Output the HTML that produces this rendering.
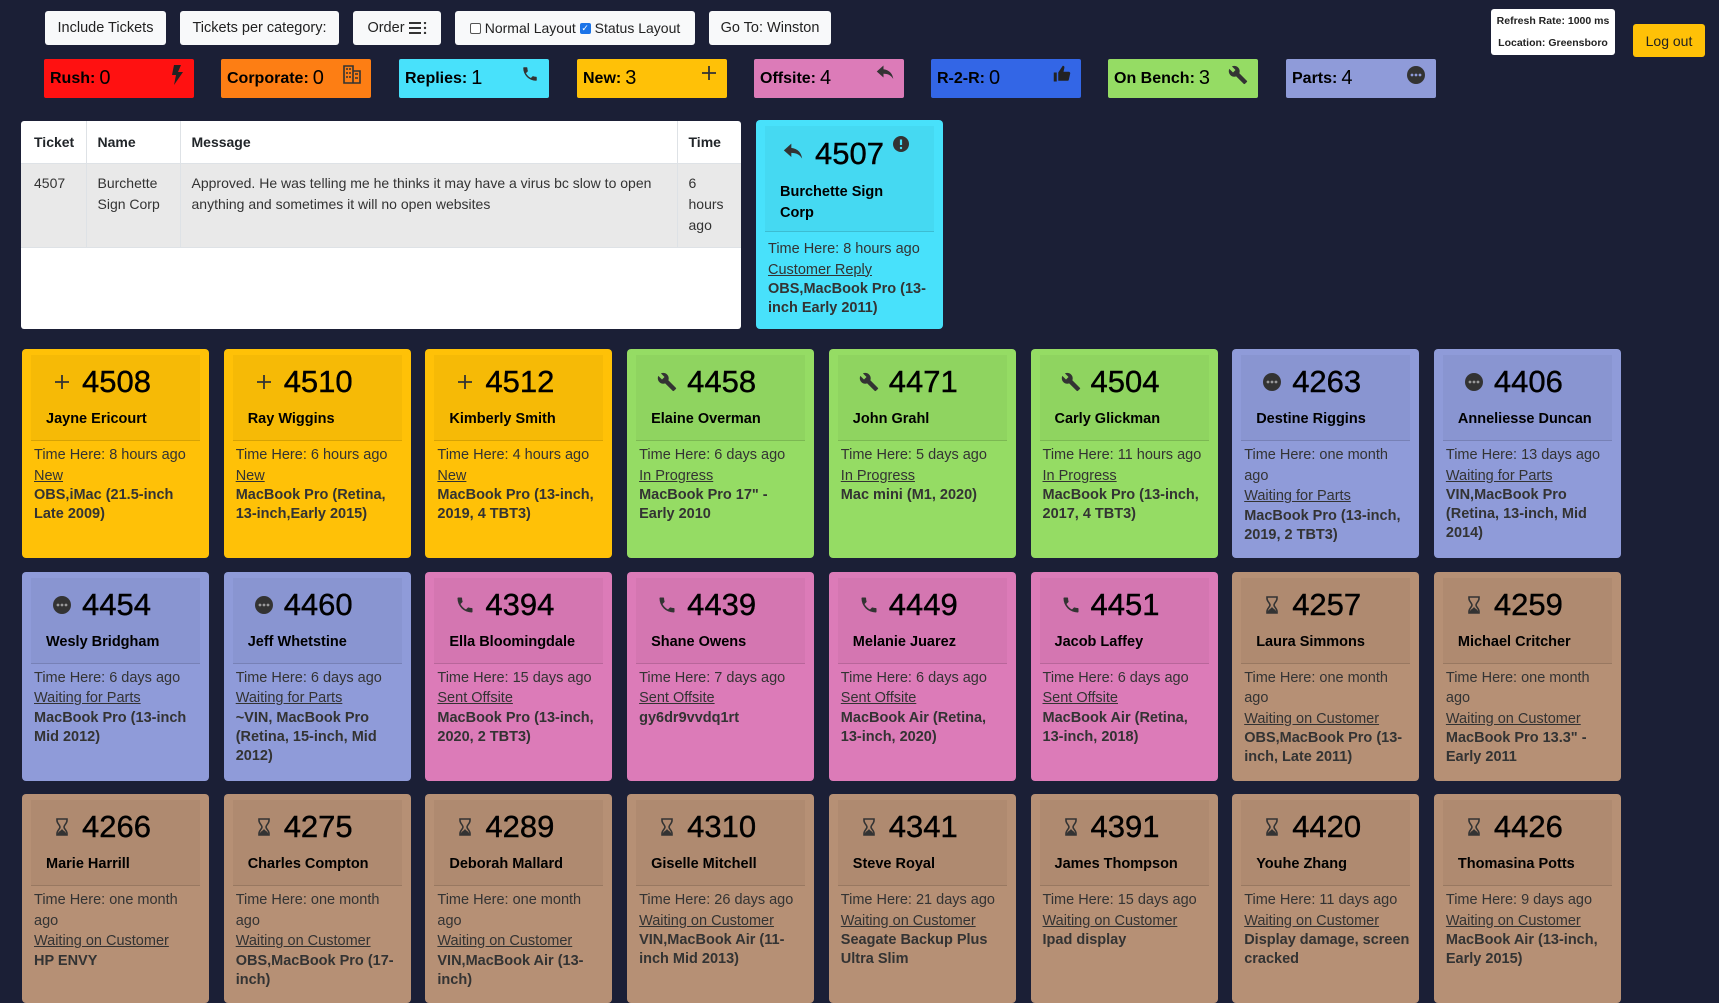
<!DOCTYPE html>
<html><head><meta charset="utf-8">
<style>
*{box-sizing:border-box;margin:0;padding:0}
body{width:1719px;height:966px;overflow:hidden;background:#1b1f36;font-family:"Liberation Sans",Arial,sans-serif;position:relative;color:#212529}
.btn{position:absolute;top:11px;height:34px;background:#f8f9fa;border-radius:3px;font-size:14.5px;color:#222;display:flex;align-items:center;justify-content:center}
.cat{position:absolute;top:59px;height:39px;width:150px;border-radius:2px;padding:0 6px;font-size:16px;font-weight:bold;color:#000;display:flex;align-items:center}
.cat .n{font-weight:normal;font-size:20px;margin-left:4px}
.cat svg{position:absolute;right:10px;top:6px}
.card{position:absolute;width:187px;height:209px;border-radius:4px;padding:6px 9px}
.hd{height:86px;background:rgba(0,0,0,.035);border-bottom:1px solid rgba(0,0,0,.13);position:relative}
.hd .num{position:absolute;left:51px;top:10px;font-size:31px;color:#000;line-height:34px;-webkit-text-stroke:0.4px #000}
.hd .ic{position:absolute;left:21px;top:17px;width:20px;height:20px}
.hd .nm{position:absolute;left:15px;top:55px;font-size:14.5px;font-weight:bold;color:#000;line-height:18px}
.bd{padding:4px 0 0 3px;font-size:14.5px;line-height:20.5px;color:#333}
.bd a{color:#333;text-decoration:underline;display:block}
.bd b{display:block;line-height:19px;color:#333}
table{border-collapse:collapse}
</style></head><body>

<div class="btn" style="left:45px;width:121px">Include Tickets</div>
<div class="btn" style="left:180px;width:159px">Tickets per category:</div>
<div class="btn" style="left:353px;width:88px">Order&nbsp;<svg width="18" height="12" viewBox="0 0 18 12"><path d="M0 1h12M0 6h12M0 11h12" stroke="#333" stroke-width="2"/><circle cx="16" cy="1" r="1.2" fill="#333"/><circle cx="16" cy="6" r="1.2" fill="#333"/><circle cx="16" cy="11" r="1.2" fill="#333"/></svg></div>
<div class="btn" style="left:455px;width:240px;font-size:14px"><span style="display:inline-block;width:11px;height:11px;border:1px solid #555;border-radius:2px;background:#fff;margin-right:4px"></span>Normal Layout&nbsp;<span style="display:inline-block;width:11px;height:11px;border-radius:2px;background:#1a73e8;margin-right:4px;color:#fff;font-size:9px;line-height:11px;text-align:center">✓</span>Status Layout</div>
<div class="btn" style="left:709px;width:122px">Go To: Winston</div>
<div class="btn" style="left:1491px;top:9px;width:124px;height:46px;flex-direction:column;font-size:10.5px;font-weight:bold;gap:10px;background:#fff"><span>Refresh Rate: 1000 ms</span><span>Location: Greensboro</span></div>
<div class="btn" style="left:1633px;top:24px;width:72px;height:33px;background:#ffc107;font-size:14px">Log out</div>

<div class="cat" style="left:44px;background:#ff1111">Rush:<span class="n">0</span><svg width="14" height="20" viewBox="0 0 14 20"><path d="M4 0h7l-3 7h5L4 20l2-10H2z" fill="#222"/></svg></div>
<div class="cat" style="left:221px;background:#fd7e14">Corporate:<span class="n">0</span><svg width="18" height="19" viewBox="0 0 18 19"><path d="M1 1h9v17H1zM10 6h7v12h-7" fill="none" stroke="#333" stroke-width="1.6"/><path d="M3 4h2M6 4h2M3 8h2M6 8h2M3 12h2M6 12h2M12 9h3M12 13h3" stroke="#333" stroke-width="1.6"/></svg></div>
<div class="cat" style="left:399px;background:#48e1fb">Replies:<span class="n">1</span><svg width="18" height="18" viewBox="0 0 24 24"><path d="M6.6 10.8a15 15 0 006.6 6.6l2.2-2.2c.3-.3.7-.4 1-.2 1.1.4 2.3.6 3.6.6.6 0 1 .4 1 1V20c0 .6-.4 1-1 1A17 17 0 013 4c0-.6.4-1 1-1h3.5c.6 0 1 .4 1 1 0 1.3.2 2.5.6 3.6.1.3 0 .7-.2 1z" fill="#333"/></svg></div>
<div class="cat" style="left:577px;background:#ffc107">New:<span class="n">3</span><svg width="16" height="16" viewBox="0 0 16 16"><path d="M8 1v14M1 8h14" stroke="#333" stroke-width="1.8"/></svg></div>
<div class="cat" style="left:754px;background:#dc7bb8">Offsite:<span class="n">4</span><svg width="18" height="16" viewBox="0 0 24 20"><path d="M10 5V0L1 8l9 8v-5c6 0 10 2 13 7-1-7-5-12-13-13z" fill="#333"/></svg></div>
<div class="cat" style="left:931px;background:#3366e6">R-2-R:<span class="n">0</span><svg width="18" height="18" viewBox="0 0 24 24"><path d="M1 10h4v12H1zM7 21V10l6-9c1.5 0 2.5 1 2.2 2.6L14 9h7c1.1 0 2 .9 2 2l-2 9c-.3.7-1 1-1.7 1z" fill="#222"/></svg></div>
<div class="cat" style="left:1108px;background:#95dc64">On Bench:<span class="n">3</span><svg width="20" height="20" viewBox="0 0 24 24"><path d="M22.7 19l-9.1-9.1c.9-2.3.4-5-1.5-6.9-2-2-5-2.4-7.4-1.3L9 6 6 9 1.6 4.7C.4 7.1.9 10.1 2.9 12.1c1.9 1.9 4.6 2.4 6.9 1.5l9.1 9.1c.4.4 1 .4 1.4 0l2.3-2.3c.5-.4.5-1.1.1-1.4z" fill="#333"/></svg></div>
<div class="cat" style="left:1286px;background:#8f9bd9">Parts:<span class="n">4</span><svg width="20" height="20" viewBox="0 0 20 20"><circle cx="10" cy="10" r="9" fill="#333"/><circle cx="6" cy="10" r="1.4" fill="#8f9bd9"/><circle cx="10" cy="10" r="1.4" fill="#8f9bd9"/><circle cx="14" cy="10" r="1.4" fill="#8f9bd9"/></svg></div>

<div style="position:absolute;left:21px;top:121px;width:720px;height:208px;background:#fff;border-radius:3px;overflow:hidden">
<table style="width:100%;font-size:14px;color:#212529;table-layout:fixed">
<tr style="height:42px;font-weight:bold;text-align:left"><td style="width:65px;padding-left:13px;border-right:1px solid #dee2e6">Ticket</td><td style="width:94px;padding-left:11px;border-right:1px solid #dee2e6">Name</td><td style="padding-left:11px;border-right:1px solid #dee2e6">Message</td><td style="width:64px;padding-left:11px">Time</td></tr>
<tr style="height:84px;background:#e9e9e9;vertical-align:top;line-height:21px;color:#333;border-top:1px solid #dee2e6;border-bottom:1px solid #dee2e6"><td style="padding:9px 0 0 13px;border-right:1px solid #dee2e6">4507</td><td style="padding:9px 0 0 11px;border-right:1px solid #dee2e6">Burchette Sign Corp</td><td style="padding:9px 8px 0 11px;border-right:1px solid #dee2e6">Approved. He was telling me he thinks it may have a virus bc slow to open anything and sometimes it will no open websites</td><td style="padding:9px 8px 0 11px">6 hours ago</td></tr>
</table></div>

<div class="card" style="left:756px;top:120px;background:#48e1fb">
<div class="hd" style="height:106px">
<svg class="ic" style="left:18px;top:16px" viewBox="0 0 24 20"><path d="M10 5V0L1 8l9 8v-5c6 0 10 2 13 7-1-7-5-12-13-13z" fill="#333"/></svg>
<div class="num" style="left:50px;top:11px">4507</div>
<svg style="position:absolute;left:128px;top:10px" width="16" height="16" viewBox="0 0 16 16"><circle cx="8" cy="8" r="8" fill="#333"/><path d="M8 3.5v5.5" stroke="#48e1fb" stroke-width="2.2"/><circle cx="8" cy="12" r="1.2" fill="#48e1fb"/></svg>
<div class="nm" style="top:56px;line-height:21px">Burchette Sign<br>Corp</div>
</div>
<div class="bd" style="padding-top:7px"><div>Time Here: 8 hours ago</div><a>Customer Reply</a><b>OBS,MacBook Pro (13-inch Early 2011)</b></div>
</div>

<div id="cards"></div>
<script>
const Y='#ffc107',G='#95dc64',P='#8f9bd9',K='#dc7bb8',B='#b69075';
const ic={
plus:'<svg class="ic" viewBox="0 0 20 20"><path d="M10 3v14M3 10h14" stroke="#333" stroke-width="1.8"/></svg>',
wr:'<svg class="ic" viewBox="0 0 24 24"><path d="M22.7 19l-9.1-9.1c.9-2.3.4-5-1.5-6.9-2-2-5-2.4-7.4-1.3L9 6 6 9 1.6 4.7C.4 7.1.9 10.1 2.9 12.1c1.9 1.9 4.6 2.4 6.9 1.5l9.1 9.1c.4.4 1 .4 1.4 0l2.3-2.3c.5-.4.5-1.1.1-1.4z" fill="#333"/></svg>',
dot:'<svg class="ic" viewBox="0 0 20 20"><circle cx="10" cy="10" r="9" fill="#333"/><circle cx="6" cy="10" r="1.4" fill="#999"/><circle cx="10" cy="10" r="1.4" fill="#999"/><circle cx="14" cy="10" r="1.4" fill="#999"/></svg>',
ph:'<svg class="ic" viewBox="0 0 24 24"><path d="M6.6 10.8a15 15 0 006.6 6.6l2.2-2.2c.3-.3.7-.4 1-.2 1.1.4 2.3.6 3.6.6.6 0 1 .4 1 1V20c0 .6-.4 1-1 1A17 17 0 013 4c0-.6.4-1 1-1h3.5c.6 0 1 .4 1 1 0 1.3.2 2.5.6 3.6.1.3 0 .7-.2 1z" fill="#333"/></svg>',
hg:'<svg class="ic" viewBox="0 0 20 20"><path d="M5 2h10v1.5c0 3-3 4.5-3 6.5s3 3.5 3 6.5V18H5v-1.5c0-3 3-4.5 3-6.5S5 6.5 5 3.5z" fill="none" stroke="#333" stroke-width="1.6"/><path d="M5.5 17.5c0-3 4.5-4 4.5-6 0 2 4.5 3 4.5 6z" fill="#333"/></svg>'};
const d=[
[Y,'plus',4508,'Jayne Ericourt','8 hours ago','New','OBS,iMac (21.5-inch Late 2009)'],
[Y,'plus',4510,'Ray Wiggins','6 hours ago','New','MacBook Pro (Retina, 13-inch,Early 2015)'],
[Y,'plus',4512,'Kimberly Smith','4 hours ago','New','MacBook Pro (13-inch, 2019, 4 TBT3)'],
[G,'wr',4458,'Elaine Overman','6 days ago','In Progress','MacBook Pro 17" - Early 2010'],
[G,'wr',4471,'John Grahl','5 days ago','In Progress','Mac mini (M1, 2020)'],
[G,'wr',4504,'Carly Glickman','11 hours ago','In Progress','MacBook Pro (13-inch, 2017, 4 TBT3)'],
[P,'dot',4263,'Destine Riggins','one month ago','Waiting for Parts','MacBook Pro (13-inch, 2019, 2 TBT3)'],
[P,'dot',4406,'Anneliesse Duncan','13 days ago','Waiting for Parts','VIN,MacBook Pro (Retina, 13-inch, Mid 2014)'],
[P,'dot',4454,'Wesly Bridgham','6 days ago','Waiting for Parts','MacBook Pro (13-inch Mid 2012)'],
[P,'dot',4460,'Jeff Whetstine','6 days ago','Waiting for Parts','~VIN, MacBook Pro (Retina, 15-inch, Mid 2012)'],
[K,'ph',4394,'Ella Bloomingdale','15 days ago','Sent Offsite','MacBook Pro (13-inch, 2020, 2 TBT3)'],
[K,'ph',4439,'Shane Owens','7 days ago','Sent Offsite','gy6dr9vvdq1rt'],
[K,'ph',4449,'Melanie Juarez','6 days ago','Sent Offsite','MacBook Air (Retina, 13-inch, 2020)'],
[K,'ph',4451,'Jacob Laffey','6 days ago','Sent Offsite','MacBook Air (Retina, 13-inch, 2018)'],
[B,'hg',4257,'Laura Simmons','one month ago','Waiting on Customer','OBS,MacBook Pro (13-inch, Late 2011)'],
[B,'hg',4259,'Michael Critcher','one month ago','Waiting on Customer','MacBook Pro 13.3" - Early 2011'],
[B,'hg',4266,'Marie Harrill','one month ago','Waiting on Customer','HP ENVY'],
[B,'hg',4275,'Charles Compton','one month ago','Waiting on Customer','OBS,MacBook Pro (17-inch)'],
[B,'hg',4289,'Deborah Mallard','one month ago','Waiting on Customer','VIN,MacBook Air (13-inch)'],
[B,'hg',4310,'Giselle Mitchell','26 days ago','Waiting on Customer','VIN,MacBook Air (11-inch Mid 2013)'],
[B,'hg',4341,'Steve Royal','21 days ago','Waiting on Customer','Seagate Backup Plus Ultra Slim'],
[B,'hg',4391,'James Thompson','15 days ago','Waiting on Customer','Ipad display'],
[B,'hg',4420,'Youhe Zhang','11 days ago','Waiting on Customer','Display damage, screen cracked'],
[B,'hg',4426,'Thomasina Potts','9 days ago','Waiting on Customer','MacBook Air (13-inch, Early 2015)']];
let h='';
d.forEach((c,i)=>{const x=22+(i%8)*201.7,y=349+Math.floor(i/8)*222.5;
h+=`<div class="card" style="left:${x}px;top:${y}px;background:${c[0]}"><div class="hd">${ic[c[1]]}<div class="num">${c[2]}</div><div class="nm">${c[3]}</div></div><div class="bd"><div>Time Here: ${c[4]}</div><a>${c[5]}</a><b>${c[6]}</b></div></div>`;});
document.getElementById('cards').innerHTML=h;
</script>
</body></html>
